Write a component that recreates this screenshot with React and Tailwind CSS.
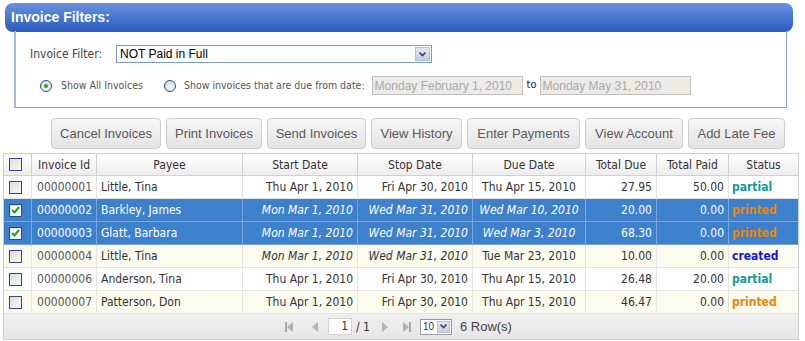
import React from "react";

// ─── Data ─────────────────────────────────────────────────────────────────────
const rows = [
  { id: "00000001", payee: "Little, Tina", start: "Thu Apr 1, 2010", stop: "Fri Apr 30, 2010", due: "Thu Apr 15, 2010", totalDue: "27.95", paid: "50.00", status: "partial" },
  { id: "00000002", payee: "Barkley, James", start: "Mon Mar 1, 2010", stop: "Wed Mar 31, 2010", due: "Wed Mar 10, 2010", totalDue: "20.00", paid: "0.00", status: "printed", selected: true, late: true, lateDue: true },
  { id: "00000003", payee: "Glatt, Barbara", start: "Mon Mar 1, 2010", stop: "Wed Mar 31, 2010", due: "Wed Mar 3, 2010", totalDue: "68.30", paid: "0.00", status: "printed", selected: true, late: true, lateDue: true },
  { id: "00000004", payee: "Little, Tina", start: "Mon Mar 1, 2010", stop: "Wed Mar 31, 2010", due: "Tue Mar 23, 2010", totalDue: "10.00", paid: "0.00", status: "created", late: true },
  { id: "00000006", payee: "Anderson, Tina", start: "Thu Apr 1, 2010", stop: "Fri Apr 30, 2010", due: "Thu Apr 15, 2010", totalDue: "26.48", paid: "20.00", status: "partial" },
  { id: "00000007", payee: "Patterson, Don", start: "Thu Apr 1, 2010", stop: "Fri Apr 30, 2010", due: "Thu Apr 15, 2010", totalDue: "46.47", paid: "0.00", status: "printed" },
];

const statusColor = {
  partial: "text-[#14999e]",
  printed: "text-[#e3870e]",
  created: "text-[#1414d2]",
};

const buttons = [
  ["Cancel Invoices", "w-[110px]"],
  ["Print Invoices", "w-[96px]"],
  ["Send Invoices", "w-[99px]"],
  ["View History", "w-[91px]"],
  ["Enter Payments", "w-[113px]"],
  ["View Account", "w-[98px]"],
  ["Add Late Fee", "w-[97px]"],
];

// ─── Small widgets ────────────────────────────────────────────────────────────
function Check({ checked }) {
  return (
    <span className="block w-[13px] h-[13px] border border-[#1f4f86] bg-gradient-to-br from-[#dcdcdc] to-[#fafafa] relative">
      {checked && (
        <span className="absolute inset-[1px] bg-white flex items-center justify-center">
          <svg width="9" height="8" viewBox="0 0 9 8">
            <path d="M1 4 L3.5 6.5 L8 1" fill="none" stroke="#21a121" strokeWidth="2" />
          </svg>
        </span>
      )}
    </span>
  );
}

function Radio({ checked }) {
  return (
    <span className="w-[12px] h-[12px] rounded-full border border-[#1f4f86] bg-gradient-to-br from-[#dcdcdc] to-[#fafafa] flex items-center justify-center">
      {checked && <span className="w-[4px] h-[4px] rounded-full bg-[#23a423]" />}
    </span>
  );
}

function PagerIcon({ dir, bar }) {
  const tri = dir === "left" ? "M9 1 L3 6 L9 11 Z" : "M3 1 L9 6 L3 11 Z";
  return (
    <svg width="12" height="12" viewBox="0 0 12 12">
      {bar && <rect x={dir === "left" ? 1 : 9} y="1" width="2" height="10" fill="#a9a9a9" />}
      <path d={tri} fill="#b3b3b3" />
    </svg>
  );
}

// ─── Main export ──────────────────────────────────────────────────────────────
export default function App() {
  const th = "h-[22px] p-0 border-r border-b border-[#d0d0d0] font-normal text-center text-[#333]";
  return (
    <div className="w-[805px] h-[341px] bg-white overflow-hidden font-['DejaVu_Sans_Condensed','DejaVu_Sans',sans-serif] text-[#333]">
      {/* Filters */}
      <div className="pt-[3px] pl-[5px]">
        <div className="w-[788px] h-[29px] rounded-[8px] bg-gradient-to-b from-[#6893dc] to-[#2c59c0] flex items-center pl-[6px]">
          <span className="text-white font-bold text-[14px] font-['Liberation_Sans',sans-serif]">Invoice Filters:</span>
        </div>
        <div className="ml-[9px] w-[773px] h-[77px] border-x border-b border-[#8da1d6] border-l-2 border-l-[#a9b7e2] -mt-[1px] pt-[14px]">
          <div className="flex items-center h-[18px]">
            <span className="ml-[14px] w-[86px] text-[12px] text-[#444]">Invoice Filter:</span>
            <div className="w-[316px] h-[18px] border border-[#7f9db9] bg-white flex items-center">
              <span className="flex-1 pl-[3px] text-[12px] text-black font-['Liberation_Sans',sans-serif]">NOT Paid in Full</span>
              <span className="w-[15px] h-[14px] mr-[1px] border border-[#b5bfd8] bg-gradient-to-b from-[#e6e9f3] to-[#c6cde1] flex items-center justify-center">
                <svg width="7" height="5" viewBox="0 0 7 5"><path d="M0.5 0.5 L3.5 3.5 L6.5 0.5" fill="none" stroke="#3b4a6b" strokeWidth="1.6" /></svg>
              </span>
            </div>
          </div>
          <div className="flex items-center h-[19px] mt-[13px] text-[10.5px] text-[#555]">
            <span className="ml-[24px]"><Radio checked /></span>
            <span className="ml-[9px]">Show All Invoices</span>
            <span className="ml-[21px]"><Radio /></span>
            <span className="ml-[8px]">Show invoices that are due from date:</span>
            <span className="ml-[7px] w-[151px] h-[19px] border border-[#c2c0b7] bg-[#ecebe6] pl-[2px] text-[12px] text-[#aaa] font-['Liberation_Sans',sans-serif] flex items-center">Monday February 1, 2010</span>
            <span className="ml-[4px] mr-[3px] text-[11px] text-[#222]">to</span>
            <span className="w-[151px] h-[19px] border border-[#c2c0b7] bg-[#ecebe6] pl-[2px] text-[12px] text-[#aaa] font-['Liberation_Sans',sans-serif] flex items-center">Monday May 31, 2010</span>
          </div>
        </div>
      </div>

      {/* Actions */}
      <div className="flex gap-[5px] pl-[51px] mt-[10px]">
        {buttons.map(([label, w]) => (
          <button key={label} className={`${w} h-[31px] rounded-[4px] border border-[#cdcdcd] bg-gradient-to-b from-[#f7f7f7] to-[#e3e3e3] text-[13px] text-[#5a5a5a] font-['Liberation_Sans',sans-serif]`}>
            {label}
          </button>
        ))}
      </div>

      {/* Grid */}
      <div className="ml-[3px] mt-[4px] w-[796px] border border-[#cfcfcf] text-[12px]">
        <table className="w-full table-fixed border-separate border-spacing-0">
          <colgroup>
            <col className="w-[28px]" />
            <col className="w-[65px]" />
            <col className="w-[146px]" />
            <col className="w-[115px]" />
            <col className="w-[115px]" />
            <col className="w-[113px]" />
            <col className="w-[71px]" />
            <col className="w-[72px]" />
            <col />
          </colgroup>
          <thead>
            <tr className="bg-gradient-to-b from-white to-[#ececec]">
              <th className="h-[22px] p-0 border-r border-b border-[#d0d0d0] pl-[5px]"><Check /></th>
              <th className={th}>Invoice Id</th>
              <th className={th}>Payee</th>
              <th className={th}>Start Date</th>
              <th className={th}>Stop Date</th>
              <th className={th}>Due Date</th>
              <th className={th}>Total Due</th>
              <th className={th}>Total Paid</th>
              <th className="h-[22px] p-0 border-b border-[#d0d0d0] font-normal text-center">Status</th>
            </tr>
          </thead>
          <tbody>
            {rows.map((r, i) => {
              const bg = r.selected ? "bg-[#3d80cb] text-white" : i % 2 ? "bg-[#fbfbee]" : "bg-white";
              const bd = r.selected ? "border-[#79a6dc]" : "border-[#e2e2e2]";
              const td = `h-[23px] py-0 px-[4px] border-r border-b ${bd} whitespace-nowrap overflow-hidden`;
              return (
                <tr key={r.id} className={bg}>
                  <td className={`h-[23px] p-0 border-r border-b ${bd} pl-[5px]`}><Check checked={r.selected} /></td>
                  <td className={`${td} text-right ${r.selected ? "" : "text-[#555]"}`}>{r.id}</td>
                  <td className={`${td} text-left`}>{r.payee}</td>
                  <td className={`${td} text-right ${r.late ? "italic" : ""}`}>{r.start}</td>
                  <td className={`${td} text-right ${r.late ? "italic" : ""}`}>{r.stop}</td>
                  <td className={`${td} text-center ${r.lateDue ? "italic" : ""}`}>{r.due}</td>
                  <td className={`${td} text-right`}>{r.totalDue}</td>
                  <td className={`${td} text-right`}>{r.paid}</td>
                  <td className={`h-[23px] py-0 px-[3px] border-b ${bd} text-left font-bold ${statusColor[r.status]}`}>{r.status}</td>
                </tr>
              );
            })}
          </tbody>
        </table>
        <div className="h-[25px] bg-gradient-to-b from-[#efefef] to-[#e6e6e6] flex items-center text-[12px] text-[#333]">
          <span className="ml-[280px]"><PagerIcon dir="left" bar /></span>
          <span className="ml-[13px]"><PagerIcon dir="left" /></span>
          <span className="ml-[7px] w-[24px] h-[17px] bg-white border border-[#d4d4d4] text-right pr-[3px] leading-[15px]">1</span>
          <span className="ml-[4px]">/ 1</span>
          <span className="ml-[9px]"><PagerIcon dir="right" /></span>
          <span className="ml-[9px]"><PagerIcon dir="right" bar /></span>
          <span className="ml-[8px] w-[32px] h-[16px] bg-white border border-[#9a9a9a] flex items-center text-[10px] font-['Liberation_Sans',sans-serif]">
            <span className="flex-1 pl-[2px]">10</span>
            <span className="w-[13px] h-[12px] mr-[1px] border border-[#b5bfd8] bg-gradient-to-b from-[#e6e9f3] to-[#c6cde1] flex items-center justify-center">
              <svg width="7" height="5" viewBox="0 0 7 5"><path d="M0.5 0.5 L3.5 3.5 L6.5 0.5" fill="none" stroke="#3b4a6b" strokeWidth="1.6" /></svg>
            </span>
          </span>
          <span className="ml-[8px] text-[13px] font-['Liberation_Sans',sans-serif] text-[#444]">6 Row(s)</span>
        </div>
      </div>
    </div>
  );
}
